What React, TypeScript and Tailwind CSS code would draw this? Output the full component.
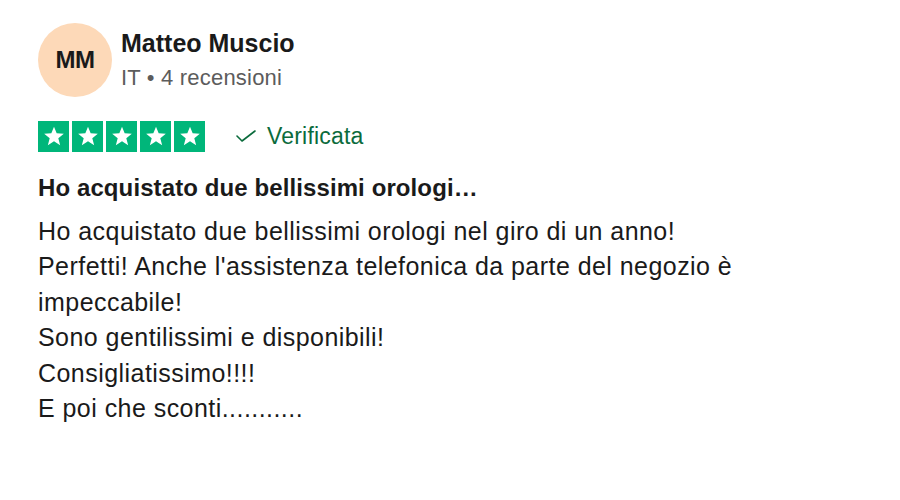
const BODY: readonly string[] = [
  "Ho acquistato due bellissimi orologi nel giro di un anno!",
  "Perfetti! Anche l'assistenza telefonica da parte del negozio è",
  "impeccabile!",
  "Sono gentilissimi e disponibili!",
  "Consigliatissimo!!!!",
  "E poi che sconti...........",
];

function Star() {
  return (
    <span className="flex h-[31px] w-[31px] items-center justify-center bg-[#00b67a]">
      <svg viewBox="0 0 24 24" className="h-[22px] w-[22px]" fill="#fff">
        <path d="M12 1.8l2.9 7.3 7.8.4-6 5 2 7.6L12 17.8l-6.7 4.3 2-7.6-6-5 7.8-.4z" />
      </svg>
    </span>
  );
}

export default function App() {
  return (
    <div className="min-h-[500px] w-[900px] bg-white pl-[38px] pt-[23px] font-['Liberation_Sans',Arial,sans-serif] text-[#1a1a1a]">
      {/* Reviewer */}
      <div className="flex items-center gap-[9px]">
        <div className="flex h-[74px] w-[74px] items-center justify-center rounded-full bg-[#fdd9b8]">
          <span className="text-[24px] font-bold tracking-[-0.6px] text-[#1a1a1a]">
            MM
          </span>
        </div>
        <div className="flex flex-col">
          <span className="text-[25px] font-bold leading-[28px] tracking-[0px]">
            Matteo Muscio
          </span>
          <span className="mt-[7px] text-[22px] leading-[28px] tracking-[0.2px] text-[#5c5c5c]">
            IT • 4 recensioni
          </span>
        </div>
      </div>

      {/* Rating */}
      <div className="mt-[22px] flex items-center">
        <div className="flex gap-[3px]">
          <Star />
          <Star />
          <Star />
          <Star />
          <Star />
        </div>
        <span className="ml-[31px] flex items-center gap-[11px] text-[23px] tracking-[0.2px] text-[#0b6b3c]">
          <svg
            viewBox="0 0 20 12"
            className="h-[12px] w-[20px]"
            fill="none"
            stroke="currentColor"
            strokeWidth={1.6}
            strokeLinecap="round"
            strokeLinejoin="round"
          >
            <polyline points="1,6 6,11 19,1" />
          </svg>
          Verificata
        </span>
      </div>

      {/* Review */}
      <h3 className="mt-[19px] text-[24px] font-bold leading-[30px] tracking-[0.1px]">
        Ho acquistato due bellissimi orologi…
      </h3>
      <div className="mt-[11px] text-[25px] leading-[35.5px] tracking-[0.45px]">
        {BODY.map((line) => (
          <p key={line}>{line}</p>
        ))}
      </div>
    </div>
  );
}
